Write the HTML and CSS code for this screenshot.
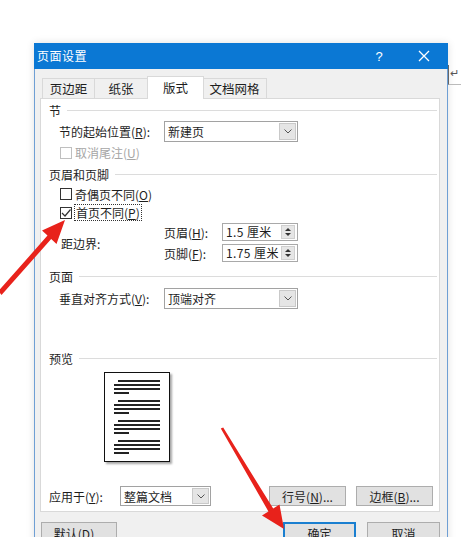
FILE: index.html
```html
<!DOCTYPE html>
<html lang="zh-CN">
<head>
<meta charset="utf-8">
<title>页面设置</title>
<link rel="stylesheet" href="styles.css">
</head>
<body>
<div class="screen">
  <div class="dialog">
    <div class="titlebar">
      <span class="title">页面设置</span>
      <span class="help">?</span>
      <span class="close"><svg width="12" height="12" viewBox="0 0 12 12"><path d="M1 1L11 11M11 1L1 11" stroke="#fff" stroke-width="1.3" fill="none"/></svg></span>
    </div>
    <div class="dbody">
      <div class="tabs">
        <div class="tab t1">页边距</div>
        <div class="tab t2">纸张</div>
        <div class="tab sel">版式</div>
        <div class="tab t4">文档网格</div>
      </div>
      <div class="panel">
        <div class="group">节</div>
        <div class="row r-start">
          <span class="label">节的起始位置(<u>R</u>):</span>
          <div class="select wide"><span class="sv">新建页</span><span class="dd"><svg width="8" height="5" viewBox="0 0 8 5"><path d="M0.5 0.5L4 4L7.5 0.5" stroke="#555" fill="none"/></svg></span></div>
        </div>
        <div class="row check disabled r-endnote"><span class="box"></span><span>取消尾注(<u>U</u>)</span></div>
        <div class="group g-hf">页眉和页脚</div>
        <div class="row check r-odd"><span class="box"></span><span>奇偶页不同(<u>O</u>)</span></div>
        <div class="row check r-first"><span class="box"><svg width="10" height="10" viewBox="0 0 10 10"><path d="M1 5L4 8L9.5 1.5" stroke="#333" stroke-width="1.2" fill="none"/></svg></span><span class="focus">首页不同(<u>P</u>)</span></div>
        <div class="margins">
          <span class="mlabel">距边界:</span>
          <div class="spins">
            <div class="spinrow">
              <span class="slabel">页眉(<u>H</u>):</span>
              <div class="spin"><span class="val">1.5 厘米</span><span class="updown"><i class="up"></i><i class="down"></i></span></div>
            </div>
            <div class="spinrow">
              <span class="slabel">页脚(<u>F</u>):</span>
              <div class="spin"><span class="val">1.75 厘米</span><span class="updown"><i class="up"></i><i class="down"></i></span></div>
            </div>
          </div>
        </div>
        <div class="group g-page">页面</div>
        <div class="row r-valign">
          <span class="label">垂直对齐方式(<u>V</u>):</span>
          <div class="select wide"><span class="sv">顶端对齐</span><span class="dd"><svg width="8" height="5" viewBox="0 0 8 5"><path d="M0.5 0.5L4 4L7.5 0.5" stroke="#555" fill="none"/></svg></span></div>
        </div>
        <div class="group g-preview">预览</div>
        <div class="preview">
          <div class="page">
            <div class="para"><i class="l1"></i><i class="l2"></i><i class="l2"></i><i class="l4"></i></div>
            <div class="para"><i class="l1"></i><i class="l2"></i><i class="l2"></i><i class="l4"></i></div>
            <div class="para"><i class="l1"></i><i class="l2"></i><i class="l2"></i><i class="l4"></i></div>
            <div class="para"><i class="l1"></i><i class="l2"></i><i class="l2"></i><i class="l4"></i></div>
          </div>
        </div>
        <div class="row r-apply">
          <span class="alabel">应用于(<u>Y</u>):</span>
          <div class="select narrow"><span class="sv">整篇文档</span><span class="dd"><svg width="8" height="5" viewBox="0 0 8 5"><path d="M0.5 0.5L4 4L7.5 0.5" stroke="#555" fill="none"/></svg></span></div>
          <div class="btn b-line">行号(<u>N</u>)...</div>
          <div class="btn b-border">边框(<u>B</u>)...</div>
        </div>
      </div>
      <div class="footer">
        <div class="btn fbtn">默认(<u>D</u>)...</div>
        <div class="btn fbtn ok">确定</div>
        <div class="btn fbtn cancel">取消</div>
      </div>
    </div>
  </div>
  <div class="behind"><span class="mark">↵</span></div>
  <svg class="arrows" width="461" height="537" viewBox="0 0 461 537">
    <polygon fill="#e8221b" points="-1.5,291 47.5,235.6 42,230.5 65,220 56.5,244 51.2,239 1.5,295"/>
    <polygon fill="#e8221b" points="223.2,427.4 273.2,508.6 279.5,504.5 284,529 262,515.5 268.4,511.4 220.8,428.6"/>
  </svg>
</div>
</body>
</html>
```

FILE: styles.css
```css
* { box-sizing: border-box; }
html, body { margin: 0; padding: 0; background: #fff; }
body {
  width: 461px;
  height: 537px;
  overflow: hidden;
  font-family: "Noto Sans CJK SC", "Noto Sans", sans-serif;
  font-size: 12px;
  color: #1e1e1e;
}
u { text-decoration: underline; text-underline-offset: 1px; }

.screen {
  position: relative;
  width: 461px;
  height: 537px;
  display: flex;
  align-items: flex-start;
  padding: 43px 0 0 34px;
}

.dialog {
  width: 414px;
  height: 520px;
  flex: none;
  background: #f0f0f0;
  border: 1px solid #6f9fd4;
  border-top: none;
  box-shadow: 0 0 8px rgba(0,0,0,0.12);
}

.titlebar {
  height: 26px;
  margin: 0 -1px;
  background: #0b78d4;
  color: #fff;
  display: flex;
  align-items: center;
  padding-left: 3px;
}
.title { font-size: 12px; letter-spacing: 0.5px; flex: 1; line-height: 26px; }
.help { width: 18px; font-family: "Liberation Sans", sans-serif; font-size: 13px; margin-right: 30px; text-align: center; }
.close { width: 14px; margin-right: 16px; display: flex; align-items: center; }

.dbody { padding: 7px 7px 0 5px; }

.tabs {
  display: flex;
  align-items: flex-end;
  height: 22px;
  padding-left: 2px;
  position: relative;
  z-index: 2;
}
.tab {
  height: 20px;
  line-height: 19px;
  text-align: center;
  border: 1px solid #d9d9d9;
  border-bottom: none;
  background: #f0f0f0;
  font-size: 12.5px;
}
.t1 { width: 53px; }
.t2 { width: 53px; border-left: none; }
.tab.sel {
  width: 57px;
  height: 23px;
  margin: 0 -1px -1px -1px;
  background: #fff;
  line-height: 21px;
  position: relative;
  z-index: 3;
}
.t4 { width: 64px; border-left: none; }

.panel {
  width: 400px;
  height: 414px;
  background: #fff;
  border: 1px solid #d9d9d9;
  display: flex;
  flex-direction: column;
}

.group {
  height: 22px;
  display: flex;
  align-items: center;
  padding-left: 8px;
  padding-right: 2px;
  color: #1e1e1e;
}
.group::after {
  content: "";
  flex: 1;
  height: 1px;
  background: #dcdcdc;
  margin-left: 6px;
  margin-top: 1px;
}
.g-page { margin-top: 3px; }
.g-preview { margin-top: 38px; }

.row {
  display: flex;
  align-items: center;
  padding-left: 18px;
  white-space: nowrap;
}
.r-start { height: 21px; }
.label { width: 105px; }

.select {
  height: 21px;
  border: 1px solid #a2a2a2;
  display: flex;
  align-items: stretch;
  background: #fff;
}
.select.wide { width: 134px; }
.select.narrow { width: 91px; height: 20px; }
.sv { flex: 1; padding-left: 3px; line-height: 19px; }
.dd {
  width: 17px;
  background: #e5e5e5;
  border: 1px solid #c9c9c9;
  margin: 1px;
  display: flex;
  align-items: center;
  justify-content: center;
}

.check { height: 21px; padding-left: 19px; }
.r-endnote { height: 21px; }
.r-odd { height: 18px; }
.r-first { height: 19px; }
.g-hf { height: 22px; }
.box {
  width: 12px;
  height: 12px;
  border: 1px solid #333;
  margin-right: 3px;
  display: flex;
  align-items: center;
  justify-content: center;
  background: #fff;
}
.disabled { color: #a6a6a6; }
.disabled .box { border-color: #bfbfbf; }
.focus {
  outline: 1px dotted #333;
  outline-offset: 0;
  padding: 0 1px;
  line-height: 15px;
}

.margins {
  height: 40px;
  display: flex;
  align-items: center;
  padding-left: 20px;
  white-space: nowrap;
}
.mlabel { width: 103px; margin-top: 3px; }
.spins { display: flex; flex-direction: column; gap: 3px; margin-top: 1px; }
.spinrow { display: flex; align-items: center; height: 18px; }
.slabel { width: 58px; }
.spin {
  width: 76px;
  height: 18px;
  border: 1px solid #a9a9a9;
  display: flex;
  align-items: stretch;
}
.val { flex: 1; padding-left: 3px; line-height: 16px; letter-spacing: 0.4px; white-space: nowrap; overflow: hidden; }
.updown {
  width: 14px;
  flex: none;
  margin: 1px 2px 1px 0;
  background: #e6e6e6;
  border: 1px solid #cfcfcf;
  display: flex;
  flex-direction: column;
  align-items: center;
  justify-content: center;
  gap: 2px;
}
.updown i { width: 0; height: 0; border-left: 3px solid transparent; border-right: 3px solid transparent; }
.updown .up { border-bottom: 3px solid #333; }
.updown .down { border-top: 3px solid #333; }

.r-valign { height: 21px; margin-top: 1px; }

.preview { height: 93px; margin-top: 3px; padding-left: 63px; }
.page {
  width: 66px;
  height: 90px;
  border: 1px solid #111;
  background: #fff;
  box-shadow: 2px 2px 2px rgba(0,0,0,0.35);
  padding: 7px 9px 0 9px;
  display: flex;
  flex-direction: column;
  gap: 6px;
}
.para { display: flex; flex-direction: column; gap: 2px; }
.para i { display: block; height: 2px; background: #222; }
.para .l1 { margin-left: 4px; }
.para .l4 { width: 15px; }

.r-apply { height: 20px; margin-top: 21px; padding-left: 8px; }
.alabel { width: 71px; }
.btn {
  height: 20px;
  border: 1px solid #adadad;
  background: #e1e1e1;
  display: flex;
  align-items: center;
  justify-content: center;
  white-space: nowrap;
}
.b-line { width: 77px; margin-left: 58px; }
.b-border { width: 77px; margin-left: 10px; }

.footer { display: flex; margin-top: 10px; padding-left: 1px; }
.fbtn { width: 76px; height: 23px; }
.ok { margin-left: 166px; width: 73px; border: 2px solid #1a7fd0; }
.cancel { margin-left: 11px; width: 73px; }

.behind {
  width: 13px;
  height: 20px;
  margin-top: 22px;
  border-left: 1px solid #666;
  border-bottom: 1px solid #bbb;
  font-size: 11px;
  color: #555;
  line-height: 14px;
  padding-left: 1px;
}

.arrows { position: absolute; left: 0; top: 0; pointer-events: none; }
```
